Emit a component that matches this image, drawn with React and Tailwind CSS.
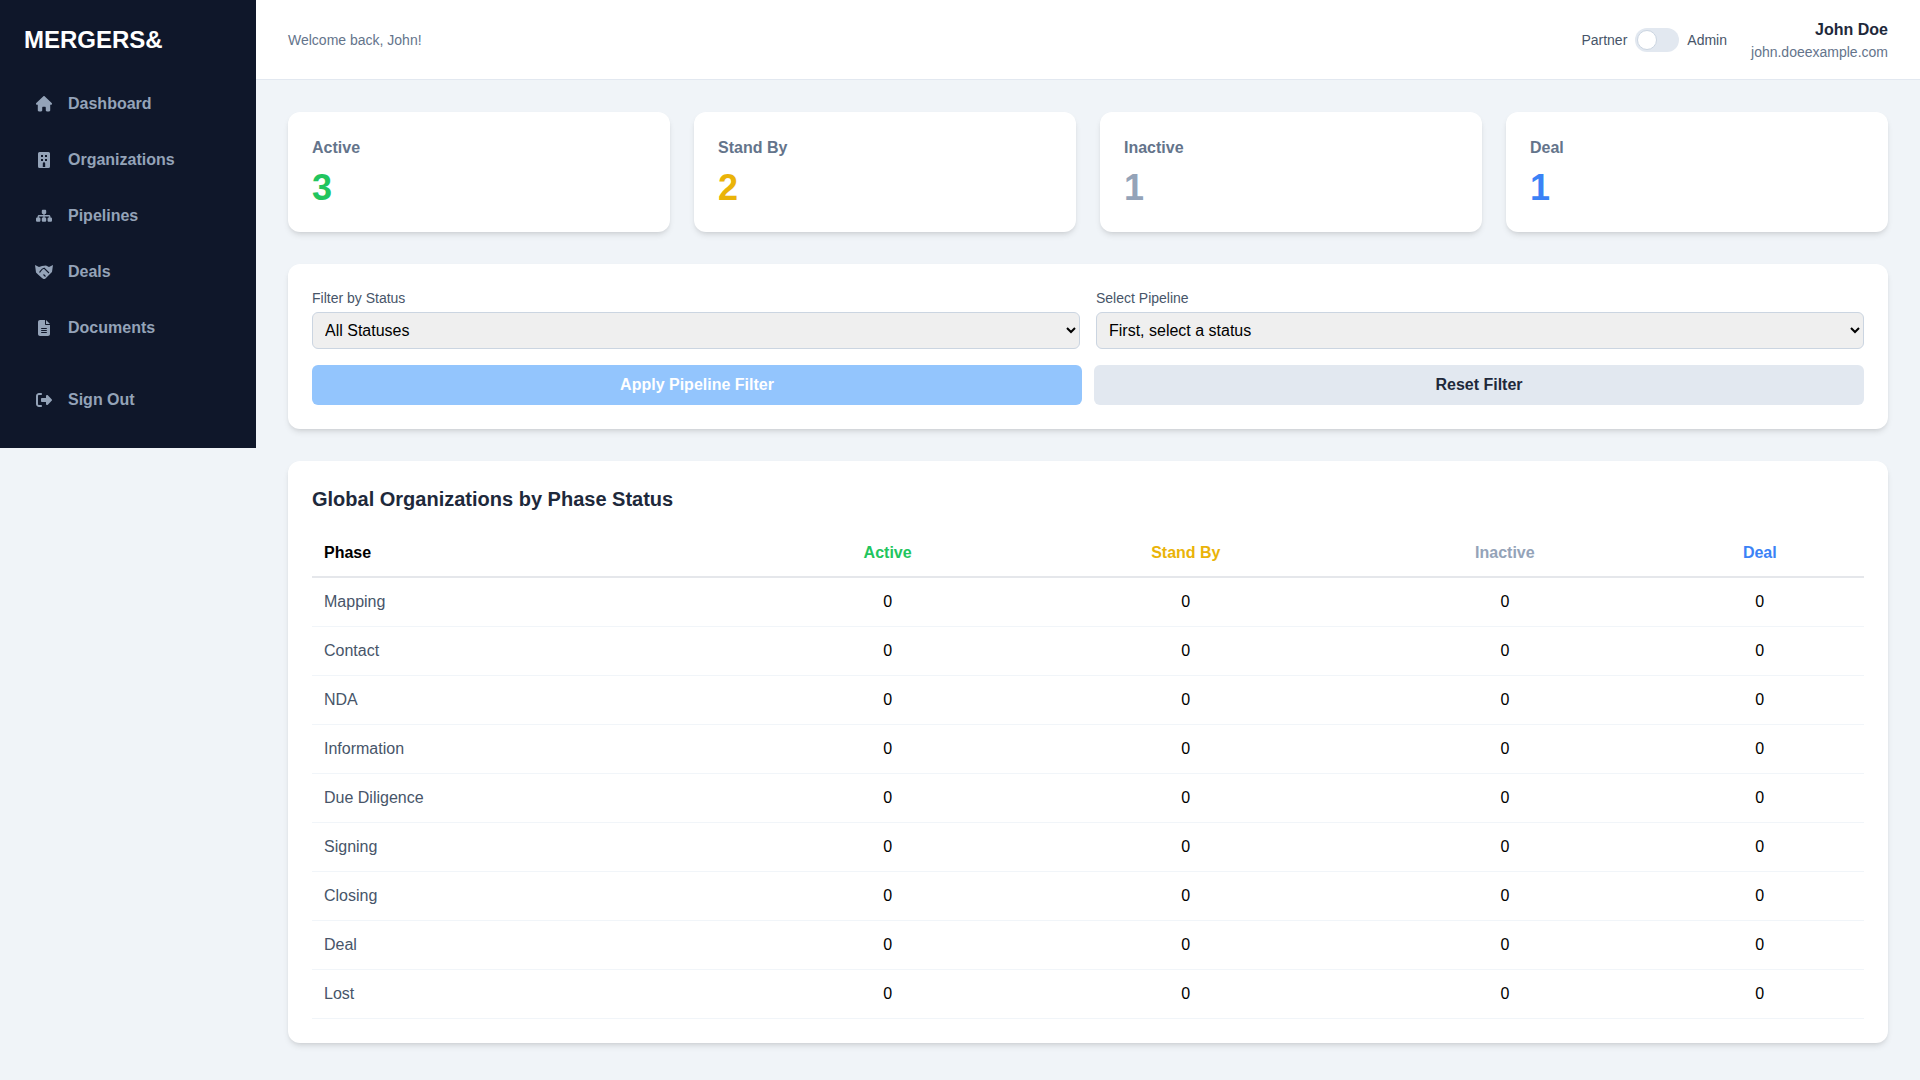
import React from "react";
import { FaHouse, FaSitemap, FaFileLines, FaRightFromBracket } from "react-icons/fa6";

function BuildingIcon({ className }) {
  return (
    <svg viewBox="0 0 12 16" className={className} fill="currentColor">
      <path
        fillRule="evenodd"
        d="M1.5 0h9A1.5 1.5 0 0 1 12 1.5v13a1.5 1.5 0 0 1-1.5 1.5h-9A1.5 1.5 0 0 1 0 14.500v-13A1.500 1.500 0 0 1 1.500 0ZM3 3v2h2V3H3Zm4 0v2h2V3H7ZM3 7v2h2V7H3Zm4 0v2h2V7H7Zm-2.200 4.500V15h2.400v-3.500a1.200 1.200 0 0 0-2.400 0Z"
      />
    </svg>
  );
}

function HandshakeIcon({ className }) {
  return (
    <svg viewBox="0 0 18 14.400" className={className} fill="currentColor">
      <path d="M0 0 4 2 7 1 11 .6 14 2 18 0 17 7 10.500 13.600 9 14.400 7 13 3 9.500 1 7.500Z" />
      <path d="M4.500 7.500C6 5.500 7 3.500 9 3.200L14 8M8.500 9.500 10.500 11.500" fill="none" stroke="#0f172a" strokeWidth="1.100" />
    </svg>
  );
}

const HomeIcon = (p) => <FaHouse {...p} preserveAspectRatio="none" />;
const SitemapIcon = (p) => <FaSitemap {...p} preserveAspectRatio="none" />;

const nav = [
  { label: "Dashboard", Icon: HomeIcon, size: "h-[15.500px] w-4" },
  { label: "Organizations", Icon: BuildingIcon, size: "h-4 w-3" },
  { label: "Pipelines", Icon: SitemapIcon, size: "h-[13.500px] w-4" },
  { label: "Deals", Icon: HandshakeIcon, size: "h-[14.400px] w-[18px]" },
  { label: "Documents", Icon: FaFileLines, size: "h-4 w-3" },
];

const stats = [
  { label: "Active", value: 3, color: "text-[#22c55e]" },
  { label: "Stand By", value: 2, color: "text-[#eab308]" },
  { label: "Inactive", value: 1, color: "text-[#94a3b8]" },
  { label: "Deal", value: 1, color: "text-[#3b82f6]" },
];

const phases = ["Mapping", "Contact", "NDA", "Information", "Due Diligence", "Signing", "Closing", "Deal", "Lost"];

function NavItem({ label, Icon, size, className = "" }) {
  return (
    <a className={`flex h-12 items-center gap-4 px-3 text-base font-semibold text-[#94a3b8] ${className}`}>
      <span className="flex w-4 shrink-0 justify-center">
        <Icon className={`shrink-0 ${size}`} />
      </span>
      <span>{label}</span>
    </a>
  );
}

export default function App() {
  return (
    <div className="flex min-h-screen items-start bg-[#f0f4f8] font-['Liberation_Sans',Arial,sans-serif] text-base">
      <aside className="flex w-64 shrink-0 flex-col bg-[#0f172a] p-6">
        <div className="mb-6 text-2xl font-bold leading-8 text-white">MERGERS&amp;</div>
        <nav className="flex flex-col gap-2">
          {nav.map((n) => (
            <NavItem key={n.label} {...n} />
          ))}
          <NavItem label="Sign Out" Icon={FaRightFromBracket} size="h-4 w-4" className="mt-4" />
        </nav>
      </aside>

      <div className="flex min-w-0 flex-1 flex-col">
        <header className="flex h-20 items-center justify-between border-b border-[#e2e8f0] bg-white px-8">
          <div className="text-sm text-[#64748b]">Welcome back, John!</div>
          <div className="flex items-center gap-6">
            <div className="flex items-center gap-2 text-sm text-[#475569]">
              <span>Partner</span>
              <span className="flex h-6 w-11 items-center rounded-full bg-[#e2e8f0] px-0.5">
                <span className="h-5 w-5 rounded-full border border-[#cbd5e1] bg-white" />
              </span>
              <span>Admin</span>
            </div>
            <div className="text-right">
              <div className="font-bold text-[#1e293b]">John Doe</div>
              <div className="text-sm text-[#64748b]">john.doeexample.com</div>
            </div>
          </div>
        </header>

        <main className="flex flex-col gap-8 p-8">
          <div className="grid grid-cols-4 gap-6">
            {stats.map((s) => (
              <div key={s.label} className="h-[120px] rounded-xl bg-white p-6 shadow-md">
                <div className="font-semibold text-[#64748b]">{s.label}</div>
                <div className={`mt-2 text-4xl font-bold leading-10 ${s.color}`}>{s.value}</div>
              </div>
            ))}
          </div>

          <div className="flex flex-col gap-4 rounded-xl bg-white p-6 shadow-md">
            <div className="grid grid-cols-2 gap-4">
              <label className="flex flex-col gap-1 text-sm text-[#475569]">
                <span>Filter by Status</span>
                <select className="w-full rounded-md border border-[#cbd5e1] bg-[#efefef] px-2 py-2 text-base text-black">
                  <option>All Statuses</option>
                </select>
              </label>
              <label className="flex flex-col gap-1 text-sm text-[#475569]">
                <span>Select Pipeline</span>
                <select className="w-full rounded-md border border-[#cbd5e1] bg-[#efefef] px-2 py-2 text-base text-black">
                  <option>First, select a status</option>
                </select>
              </label>
            </div>
            <div className="grid grid-cols-2 gap-3">
              <button className="h-10 rounded-md bg-[#93c5fd] font-bold text-white">Apply Pipeline Filter</button>
              <button className="h-10 rounded-md bg-[#e2e8f0] font-bold text-[#1e293b]">Reset Filter</button>
            </div>
          </div>

          <div className="rounded-xl bg-white p-6 shadow-md">
            <h2 className="mb-4 text-xl font-bold leading-7 text-[#1e293b]">Global Organizations by Phase Status</h2>
            <table className="w-full border-collapse">
              <thead>
                <tr className="border-b-2 border-[#e5e7eb]">
                  <th className="px-3 pb-[11px] pt-3 text-left font-bold text-black">Phase</th>
                  <th className="px-3 pb-[11px] pt-3 text-center font-bold text-[#22c55e]">Active</th>
                  <th className="px-3 pb-[11px] pt-3 text-center font-bold text-[#eab308]">Stand By</th>
                  <th className="px-3 pb-[11px] pt-3 text-center font-bold text-[#94a3b8]">Inactive</th>
                  <th className="px-3 pb-[11px] pt-3 text-center font-bold text-[#3b82f6]">Deal</th>
                </tr>
              </thead>
              <tbody>
                {phases.map((p) => (
                  <tr key={p} className="border-b border-[#f1f5f9]">
                    <td className="px-3 py-3 text-[#475569]">{p}</td>
                    <td className="px-3 py-3 text-center text-black">0</td>
                    <td className="px-3 py-3 text-center text-black">0</td>
                    <td className="px-3 py-3 text-center text-black">0</td>
                    <td className="px-3 py-3 text-center text-black">0</td>
                  </tr>
                ))}
              </tbody>
            </table>
          </div>
        </main>
      </div>
    </div>
  );
}
